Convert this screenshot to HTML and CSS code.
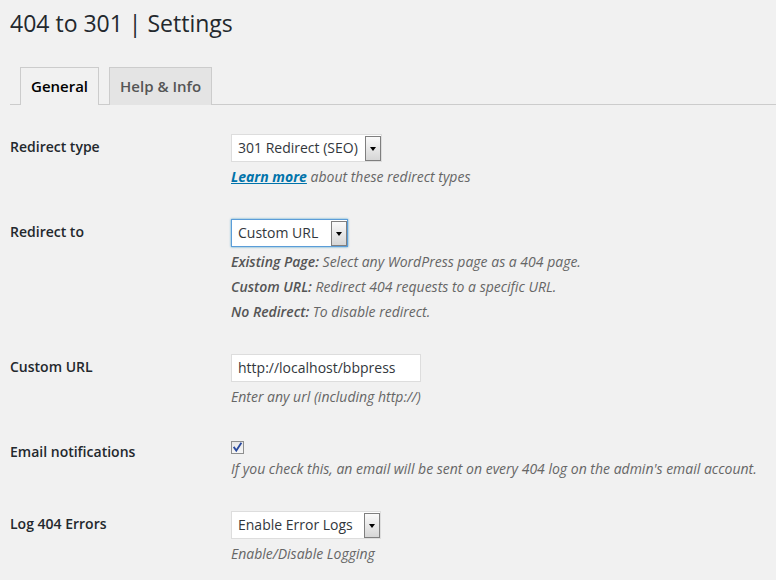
FILE: index.html
```html
<!DOCTYPE html>
<html>
<head>
<meta charset="utf-8">
<link rel="stylesheet" href="styles.css">
</head>
<body>
<div class="wrap">
  <h1 class="title">404 to 301 | Settings</h1>
  <nav class="tabs">
    <span class="tab tab-active">General</span>
    <span class="tab">Help &amp; Info</span>
  </nav>
  <div class="form">
    <div class="row">
      <div class="label">Redirect type</div>
      <div class="field">
        <div class="select select-type">
          <span class="select-text">301 Redirect (SEO)</span>
          <span class="select-btn"><span class="arrow"></span></span>
        </div>
        <p class="desc"><a class="link">Learn more</a> about these redirect types</p>
      </div>
    </div>
    <div class="row">
      <div class="label">Redirect to</div>
      <div class="field">
        <div class="select select-to select-focus">
          <span class="select-text">Custom URL</span>
          <span class="select-btn"><span class="arrow"></span></span>
        </div>
        <p class="desc"><b>Existing Page:</b> Select any WordPress page as a 404 page.</p>
        <p class="desc desc-tight"><b>Custom URL:</b> Redirect 404 requests to a specific URL.</p>
        <p class="desc desc-tight"><b>No Redirect:</b> To disable redirect.</p>
      </div>
    </div>
    <div class="row">
      <div class="label">Custom URL</div>
      <div class="field">
        <div class="input">http://localhost/bbpress</div>
        <p class="desc">Enter any url (including http://)</p>
      </div>
    </div>
    <div class="row">
      <div class="label">Email notifications</div>
      <div class="field">
        <div class="check-wrap">
          <span class="checkbox">
            <svg width="11" height="11" viewBox="0 0 11 11"><path d="M2.2 5.6 L4.3 8.6 L8.9 1.6" fill="none" stroke="#2a4a9e" stroke-width="1.8" stroke-linecap="square"/></svg>
          </span>
        </div>
        <p class="desc">If you check this, an email will be sent on every 404 log on the admin's email account.</p>
      </div>
    </div>
    <div class="row">
      <div class="label">Log 404 Errors</div>
      <div class="field">
        <div class="select select-log">
          <span class="select-text">Enable Error Logs</span>
          <span class="select-btn"><span class="arrow"></span></span>
        </div>
        <p class="desc">Enable/Disable Logging</p>
      </div>
    </div>
  </div>
</div>
</body>
</html>
```

FILE: styles.css
```css
html, body {
  margin: 0;
  padding: 0;
  background: #f1f1f1;
}
body {
  font-family: "Open Sans", "Liberation Sans", sans-serif;
  font-size: 14px;
  color: #444;
  overflow: hidden;
}
.wrap {
  padding: 9px 0 0 10px;
}
.title {
  margin: 0;
  font-size: 23px;
  font-weight: 400;
  line-height: 29px;
  color: #23282d;
}
.tabs {
  display: flex;
  gap: 10px;
  margin-top: 29px;
  padding-left: 10px;
  border-bottom: 1px solid #ccc;
  height: 37px;
}
.tab {
  display: block;
  box-sizing: border-box;
  height: 38px;
  padding: 6px 10px 0 10px;
  border: 1px solid #ccc;
  border-bottom: none;
  background: #e4e4e4;
  font-size: 15px;
  font-weight: 600;
  line-height: 24px;
  color: #555;
}
.tab-active {
  background: #f1f1f1;
  color: #000;
}
.form {
  padding-top: 14px;
}
.row {
  display: flex;
  padding: 15px 0;
}
.label {
  width: 221px;
  flex: none;
  padding-top: 3px;
  font-weight: 600;
  line-height: 20px;
  color: #23282d;
}
.field {
  flex: 1;
}
.select {
  display: flex;
  align-items: stretch;
  box-sizing: border-box;
  height: 28px;
  border: 1px solid #ddd;
  background: #fff;
  color: #32373c;
}
.select-type { width: 151px; }
.select-to { width: 117px; }
.select-log { width: 150px; }
.select-focus {
  border-color: #5b9dd9;
  box-shadow: 0 0 2px rgba(30, 140, 190, 0.8);
}
.select-text {
  flex: 1;
  padding-left: 6px;
  line-height: 26px;
  white-space: nowrap;
}
.select-btn {
  flex: none;
  width: 16px;
  margin: 1px 0 0 0;
  box-sizing: border-box;
  border: 1px solid #7f7f7f;
  background: linear-gradient(#fafafa, #d6d6d6);
  display: flex;
  align-items: center;
  justify-content: center;
}
.arrow {
  width: 0;
  height: 0;
  border-left: 3.5px solid transparent;
  border-right: 3.5px solid transparent;
  border-top: 4px solid #000;
}
.input {
  box-sizing: border-box;
  width: 190px;
  height: 28px;
  border: 1px solid #ddd;
  background: #fff;
  padding-left: 6px;
  line-height: 26px;
  color: #32373c;
}
.desc {
  margin: 2px 0 0;
  line-height: 25px;
  font-style: italic;
  color: #666;
}
.desc-tight {
  margin-top: 0;
}
.desc b {
  font-weight: 600;
  color: #555;
}
.link {
  color: #0073aa;
  font-weight: 700;
  text-decoration: underline;
}
.check-wrap {
  height: 13px;
  padding-top: 2px;
}
.checkbox {
  display: flex;
  align-items: center;
  justify-content: center;
  box-sizing: border-box;
  width: 13px;
  height: 13px;
  border: 1px solid #8e8f8f;
  background: linear-gradient(#e8e8e8, #f6f6f6);
}
.checkbox svg {
  display: block;
}
```
